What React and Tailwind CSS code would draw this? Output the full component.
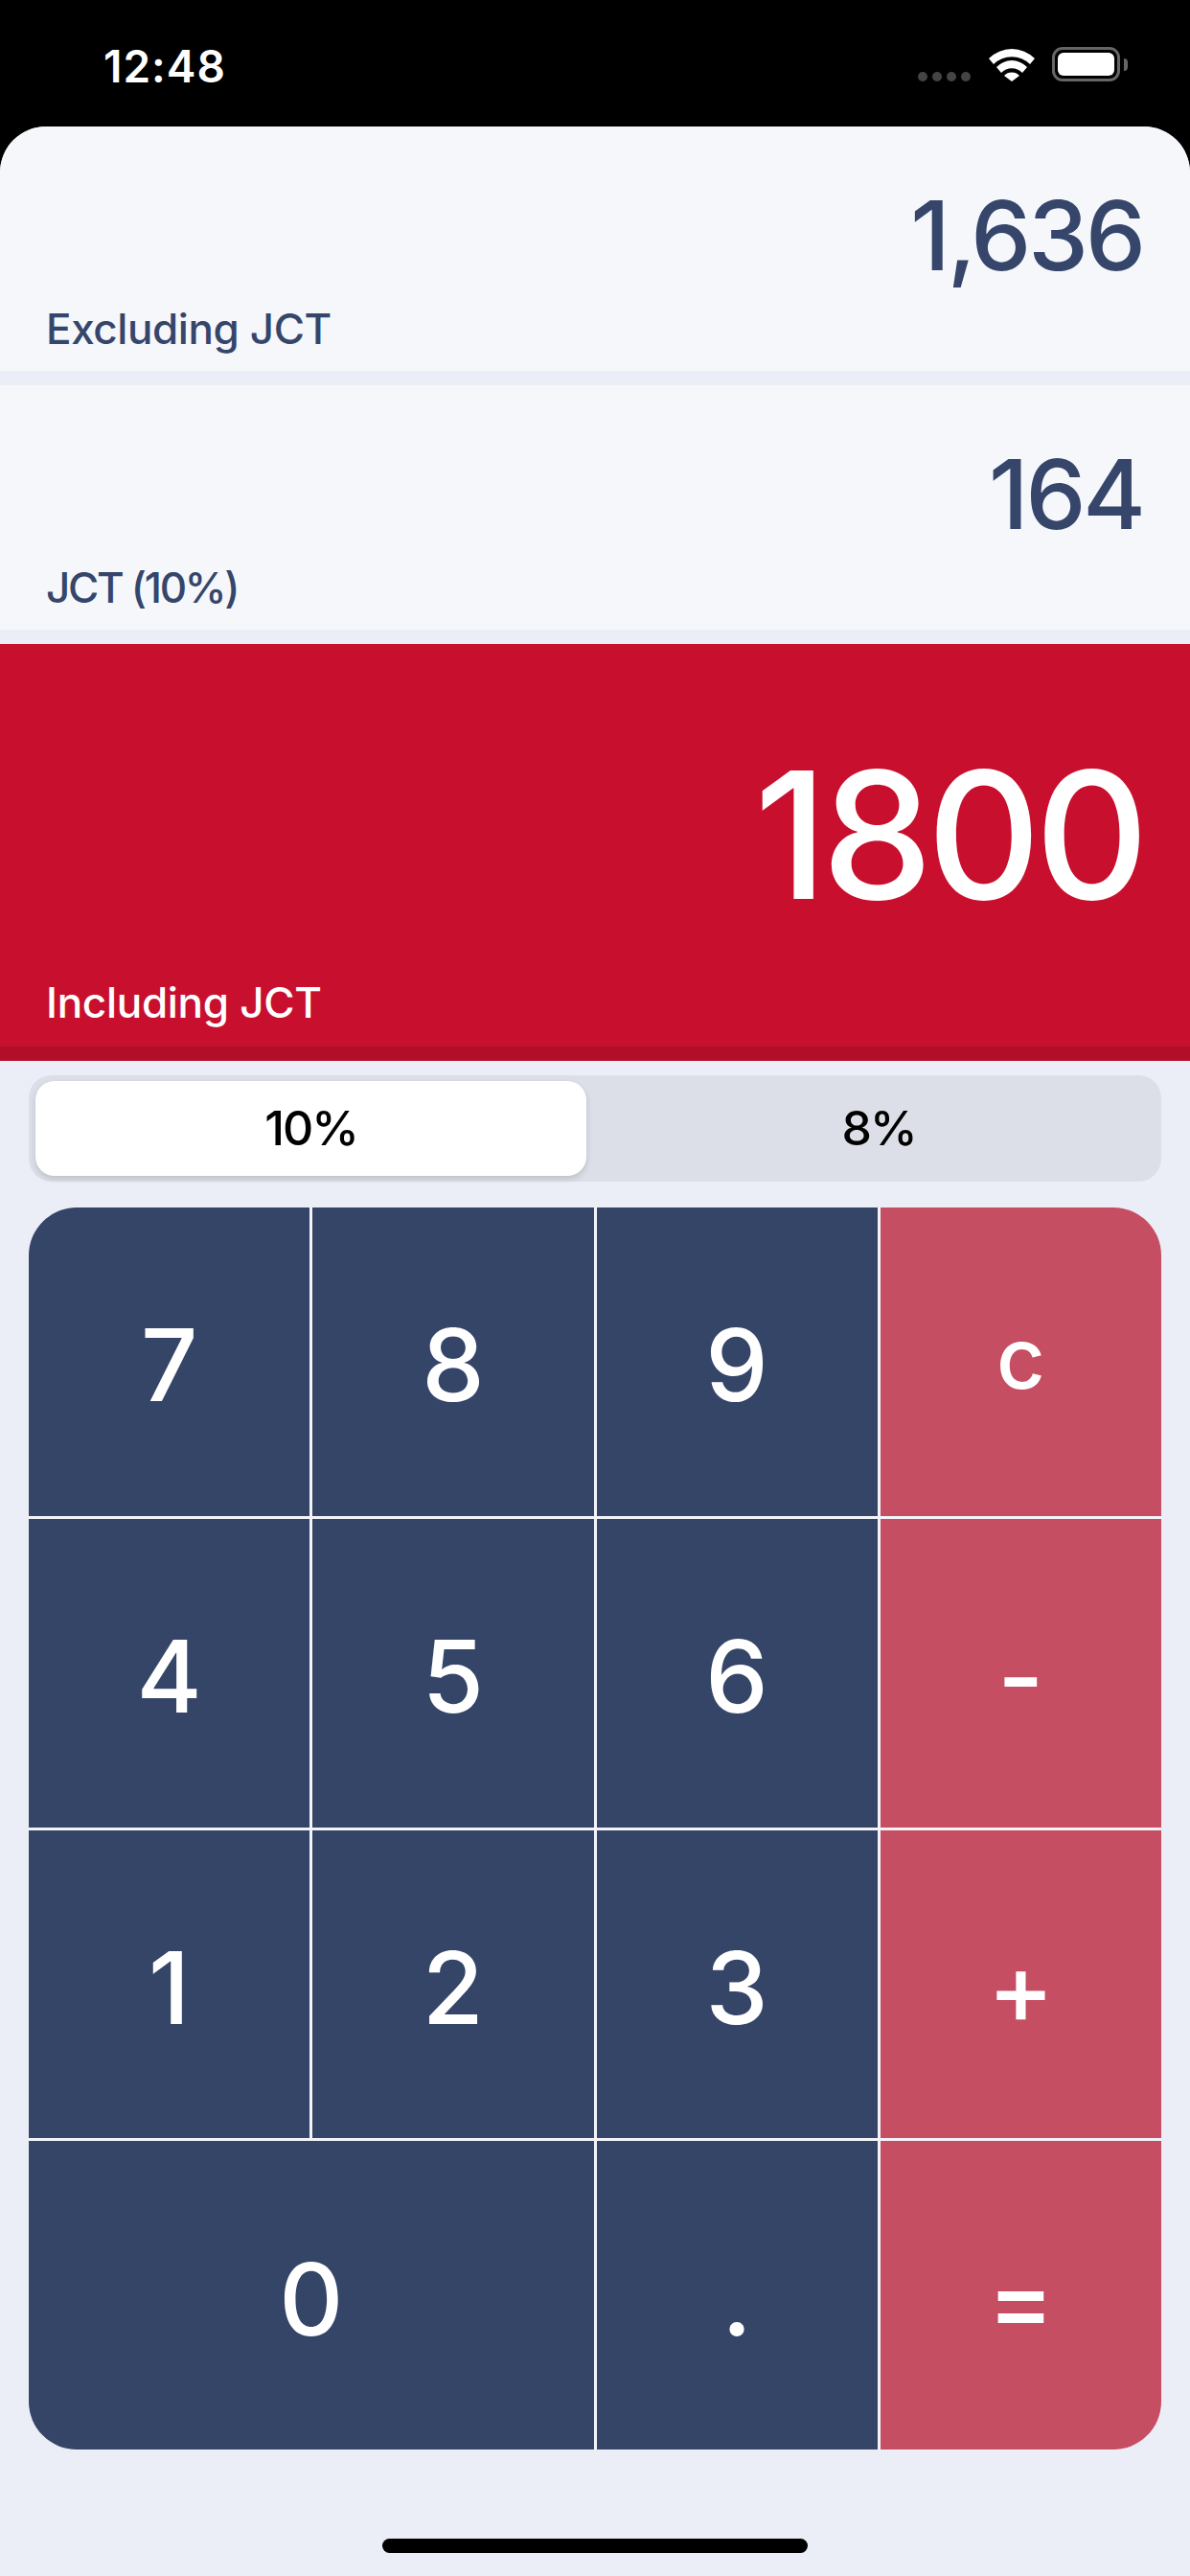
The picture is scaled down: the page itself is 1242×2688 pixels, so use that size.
function StatusBar() {
  return (
    <div className="h-[132px] bg-black flex items-start justify-between pl-[108px] pr-[65px] pt-[42px]">
      <span className="text-white text-[46px] font-semibold leading-[54px] tracking-[1px]">12:48</span>
      <div className="flex items-end mt-[7px] h-[36px]">
        <div className="flex gap-[5px] mr-[19px]">
          <span className="w-[10px] h-[10px] rounded-full bg-[#444]" />
          <span className="w-[10px] h-[10px] rounded-full bg-[#444]" />
          <span className="w-[10px] h-[10px] rounded-full bg-[#444]" />
          <span className="w-[10px] h-[10px] rounded-full bg-[#444]" />
        </div>
        <svg width="48" height="36" viewBox="0 0 48 36" className="mr-[18px]">
          <path d="M0 12 A34 34 0 0 1 48 12 L43 18 A27 27 0 0 0 5 18 Z" fill="#fff" />
          <path d="M8 21 A22 22 0 0 1 40 21 L35 27 A15 15 0 0 0 13 27 Z" fill="#fff" />
          <path d="M16 30 A11 11 0 0 1 32 30 L24 36 Z" fill="#fff" />
        </svg>
        <div className="flex items-center">
          <div className="w-[71px] h-[36px] rounded-[11px] border-[3px] border-[#666] p-[3px]">
            <div className="w-full h-full bg-white rounded-[6px]" />
          </div>
          <div className="w-[4px] h-[13px] bg-[#666] rounded-r-full ml-[4px]" />
        </div>
      </div>
    </div>
  );
}

function Readout({ label, value, labelTracking }) {
  return (
    <div className="h-[255px] bg-[#f5f7fb] flex flex-col justify-between px-[48px]">
      <div className="text-right text-[#36466b] text-[100px] font-medium leading-[100px] tracking-[-3px] mt-[64px] mr-[1px]">{value}</div>
      <div className={`text-[#36466b] text-[44px] font-medium leading-[52px] mb-[18px] ${labelTracking}`}>{label}</div>
    </div>
  );
}

function Key({ children, red, wide }) {
  return (
    <button
      className={`${red ? "bg-[#c64e62]" : "bg-[#354568]"} ${wide ? "col-span-2" : ""} flex items-center justify-center text-white text-[104px] font-medium leading-none pt-[7px]`}
    >
      {children}
    </button>
  );
}

export default function App() {
  return (
    <div className="font-['Inter','Noto_Sans',sans-serif] w-[1242px] h-[2688px] bg-[#ebeef6] flex flex-col relative overflow-hidden">
      <StatusBar />
      <div className="bg-black">
        <div className="rounded-t-[48px] overflow-hidden bg-[#ebeef6] flex flex-col gap-[15px]">
          <Readout label="Excluding JCT" value="1,636" labelTracking="tracking-[-0.4px]" />
          <Readout label="JCT (10%)" value="164" labelTracking="tracking-[-2.3px]" />
          <div className="h-[435px] bg-[#c8102e] border-b-[15px] border-[#b20e29] flex flex-col justify-between px-[48px]">
            <div className="text-right text-white text-[184px] font-medium leading-[184px] tracking-[-6px] mt-[107px] mr-[1px]">1800</div>
            <div className="text-white text-[44px] font-medium leading-[52px] tracking-[-0.3px] mb-[20px]">Including JCT</div>
          </div>
        </div>
      </div>
      <div className="mx-[30px] mt-[15px] h-[111px] rounded-[24px] bg-[#dcdfe7] flex p-[6px] pl-[7px] text-[50px] font-medium tracking-[-2px] text-black">
        <div className="w-[575px] rounded-[20px] bg-white shadow-[0_3px_6px_rgba(0,0,0,0.14)] flex items-center justify-center">10%</div>
        <div className="flex-1 flex items-center justify-center pl-[16px]">8%</div>
      </div>
      <div className="mx-[30px] mt-[27px] h-[1296px] rounded-[50px] overflow-hidden bg-[#f2f4f9] grid grid-cols-4 grid-rows-4 gap-[3px]">
        <Key>7</Key>
        <Key>8</Key>
        <Key>9</Key>
        <Key red><span className="text-[88px] mb-[14px]">c</span></Key>
        <Key>4</Key>
        <Key>5</Key>
        <Key>6</Key>
        <Key red>-</Key>
        <Key>1</Key>
        <Key>2</Key>
        <Key>3</Key>
        <Key red>+</Key>
        <Key wide>0</Key>
        <Key>.</Key>
        <Key red>=</Key>
      </div>
      <div className="absolute left-[399px] top-[2649px] w-[444px] h-[15px] rounded-full bg-black" />
    </div>
  );
}
